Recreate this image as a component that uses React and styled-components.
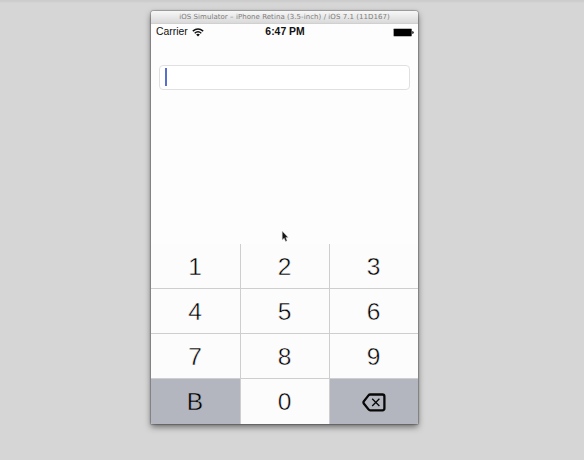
import React from "react";
import styled, { createGlobalStyle } from "styled-components";

const Global = createGlobalStyle`
  * { box-sizing: border-box; }
  body { margin: 0; background: #d6d6d6; font-family: "Liberation Sans", Arial, sans-serif; }
`;

const Desktop = styled.main`
  position: relative;
  width: 584px;
  height: 460px;
  overflow: hidden;
  padding: 11px 0 0 151px;
  background: linear-gradient(#cbcbcb 0, #cfcfcf 2px, #d6d6d6 3px);
`;

const Simulator = styled.section`
  display: flex;
  flex-direction: column;
  width: 267px;
  height: 413px;
  border-radius: 3px 3px 1px 1px;
  overflow: hidden;
  background: #fdfdfd;
  box-shadow: 0 0 1px 1px rgba(0, 0, 0, 0.24), 0 3px 6px rgba(0, 0, 0, 0.5);
`;

const TitleBar = styled.header`
  flex: 0 0 13px;
  display: flex;
  align-items: center;
  justify-content: center;
  background: linear-gradient(#f7f7f7, #d9d9d9);
  border-bottom: 1px solid #d0d0d0;
  color: #7c7c7c;
`;

const Title = styled.span`
  font: 7px/12px "DejaVu Sans", sans-serif;
  letter-spacing: 0.055px;
  white-space: nowrap;
`;

const StatusBar = styled.div`
  flex: 0 0 16px;
  display: grid;
  grid-template-columns: 1fr auto 1fr;
  align-items: center;
  padding: 0 4px 0 5px;
  font-size: 10.4px;
  line-height: 16px;
  color: #111;
`;

const Carrier = styled.div`
  display: flex;
  align-items: center;
  gap: 4px;
`;

const Clock = styled.div`
  font-weight: bold;
  font-size: 10.4px;
`;

const Power = styled.div`
  display: flex;
  justify-content: flex-end;
`;

const Content = styled.div`
  flex: 1;
  padding: 25px 8px 0;
`;

const Field = styled.div`
  height: 25px;
  padding: 2px 5px;
  border: 1px solid #e0e0e0;
  border-radius: 4px;
  background: #fff;
`;

const Caret = styled.div`
  width: 2px;
  height: 18px;
  background: #5870c9;
`;

const Keypad = styled.div`
  flex: 0 0 180px;
  display: grid;
  grid-template-columns: 89px 88px 88px;
  grid-template-rows: 44px 44px 44px 45px;
  gap: 1px;
  background: #cecece;
`;

const Key = styled.div`
  display: flex;
  align-items: center;
  justify-content: center;
  padding: 0 1px 0 0;
  color: #000;
  background: ${(p) => (p.$muted ? "#b3b6be" : "#fcfcfc")};
  font-size: 24.5px;
  line-height: 27px;
  -webkit-text-stroke: 0.45px ${(p) => (p.$muted ? "#b3b6be" : "#fcfcfc")};
`;

const Pointer = styled.svg`
  position: absolute;
  left: 281px;
  top: 230px;
`;

const Wifi = () => (
  <svg width="12" height="9" viewBox="0 0 12 9" fill="none" stroke="#111" strokeWidth="1.5">
    <path d="M0.8 3.1Q6 -1.2 11.2 3.1" />
    <path d="M2.7 5.2Q6 2.4 9.3 5.2" />
    <path d="M4.1 6.5Q6 5 7.9 6.5L6 8.5Z" fill="#111" stroke="none" />
  </svg>
);

const Battery = () => (
  <svg width="21" height="9" viewBox="0 0 21 9">
    <rect x="0.3" y="0.5" width="18.6" height="8" rx="1" fill="#777" />
    <rect x="1" y="1" width="17.4" height="7" rx="0.4" fill="#000" />
    <path d="M19.2 3Q20.8 3.2 20.8 4.5Q20.8 5.8 19.2 6Z" fill="#222" />
  </svg>
);

const Backspace = () => (
  <svg width="24" height="20" viewBox="0 -1 24 20" fill="none" stroke="#080808">
    <path
      d="M8.2 1.5H20.4Q22.4 1.5 22.4 3.5V15.3Q22.4 17.3 20.4 17.3H8.2Q7.2 17.3 6.5 16.4L1.8 10.5Q1.1 9.4 1.8 8.3L6.5 2.4Q7.2 1.5 8.2 1.5Z"
      strokeWidth="2.3"
    />
    <path d="M10.2 5.8L17.4 13M17.4 5.8L10.2 13" strokeWidth="1.3" />
  </svg>
);

const keys = ["1", "2", "3", "4", "5", "6", "7", "8", "9", "B", "0", "delete"];

export default function App() {
  return (
    <>
      <Global />
      <Desktop>
        <Simulator>
          <TitleBar>
            <Title>iOS Simulator – iPhone Retina (3.5-inch) / iOS 7.1 (11D167)</Title>
          </TitleBar>
          <StatusBar>
            <Carrier>Carrier <Wifi /></Carrier>
            <Clock>6:47 PM</Clock>
            <Power><Battery /></Power>
          </StatusBar>
          <Content>
            <Field><Caret /></Field>
          </Content>
          <Keypad>
            {keys.map((key) => (
              <Key key={key} $muted={key === "B" || key === "delete"}>
                {key === "delete" ? <Backspace /> : key}
              </Key>
            ))}
          </Keypad>
        </Simulator>
        <Pointer width="8" height="13" viewBox="0 0 8 13">
          <path d="M1.2 1V10L3.2 8.2L4.6 11.4L6.1 10.7L4.8 7.6H7.2Z" fill="#151515" stroke="#ddd" strokeWidth="0.5" />
        </Pointer>
      </Desktop>
    </>
  );
}
